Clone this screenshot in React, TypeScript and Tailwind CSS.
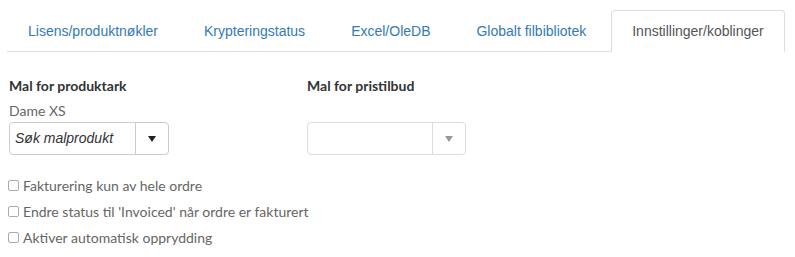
const tabs = [
  'Lisens/produktnøkler',
  'Krypteringstatus',
  'Excel/OleDB',
  'Globalt filbibliotek',
  'Innstillinger/koblinger',
];

const options = [
  'Fakturering kun av hele ordre',
  "Endre status til 'Invoiced' når ordre er fakturert",
  'Aktiver automatisk opprydding',
];

export default function App() {
  const active = tabs.length - 1;

  return (
    <div className="w-[795px] h-[257px] overflow-hidden bg-white pt-[10px] font-[family-name:'Lato',sans-serif] text-[#555]">
      <ul className="ml-[7px] w-[777px] flex gap-[4px] border-b border-[#ddd] font-[family-name:'Liberation_Sans',Arial,sans-serif] text-[14px] leading-[20px]">
        {tabs.map((tab, i) => (
          <li key={tab} className="-mb-px shrink-0">
            <a
              className={`block whitespace-nowrap px-[20px] py-[10px] rounded-t-[4px] border ${
                i === active
                  ? 'bg-white text-[#555] border-[#ddd] border-b-white'
                  : 'text-[#337ab7] border-transparent'
              }`}
            >
              {tab}
            </a>
          </li>
        ))}
      </ul>

      <div className="px-[9px] mt-[24px]">
        <div className="flex">
          <div className="w-[298px]">
            <h4 className="text-[14px] leading-[20px] font-bold text-[#333]">Mal for produktark</h4>
            <div className="mt-[5px] text-[14px] leading-[20px] text-[#666]">Dame XS</div>
            <div className="mt-[1px] w-[160px] h-[33px] flex border border-[#ccc] rounded-[4px] bg-white">
              <div className="flex-1 flex items-center pl-[5px] italic font-[family-name:'Liberation_Sans',Arial,sans-serif] text-[14px] text-[#333]">
                Søk malprodukt
              </div>
              <div className="w-[33px] border-l border-[#ccc] flex items-center justify-center">
                <span className="w-0 h-0 border-l-[4px] border-r-[4px] border-t-[6px] border-l-transparent border-r-transparent border-t-[#222]" />
              </div>
            </div>
          </div>
          <div className="w-[298px]">
            <h4 className="text-[14px] leading-[20px] font-bold text-[#333]">Mal for pristilbud</h4>
            <div className="mt-[26px] w-[159px] h-[33px] flex border border-[#ddd] rounded-[4px] bg-white">
              <div className="flex-1" />
              <div className="w-[33px] border-l border-[#ddd] flex items-center justify-center">
                <span className="w-0 h-0 border-l-[4px] border-r-[4px] border-t-[6px] border-l-transparent border-r-transparent border-t-[#999]" />
              </div>
            </div>
          </div>
        </div>

        <div className="mt-[17px] -ml-[1px]">
          {options.map((opt) => (
            <label key={opt} className="flex items-center gap-[4px] h-[26px] text-[14px] text-[#666]">
              <span className="w-[11px] h-[11px] border border-[#aaa] rounded-[2px] bg-white" />
              {opt}
            </label>
          ))}
        </div>
      </div>
    </div>
  );
}
